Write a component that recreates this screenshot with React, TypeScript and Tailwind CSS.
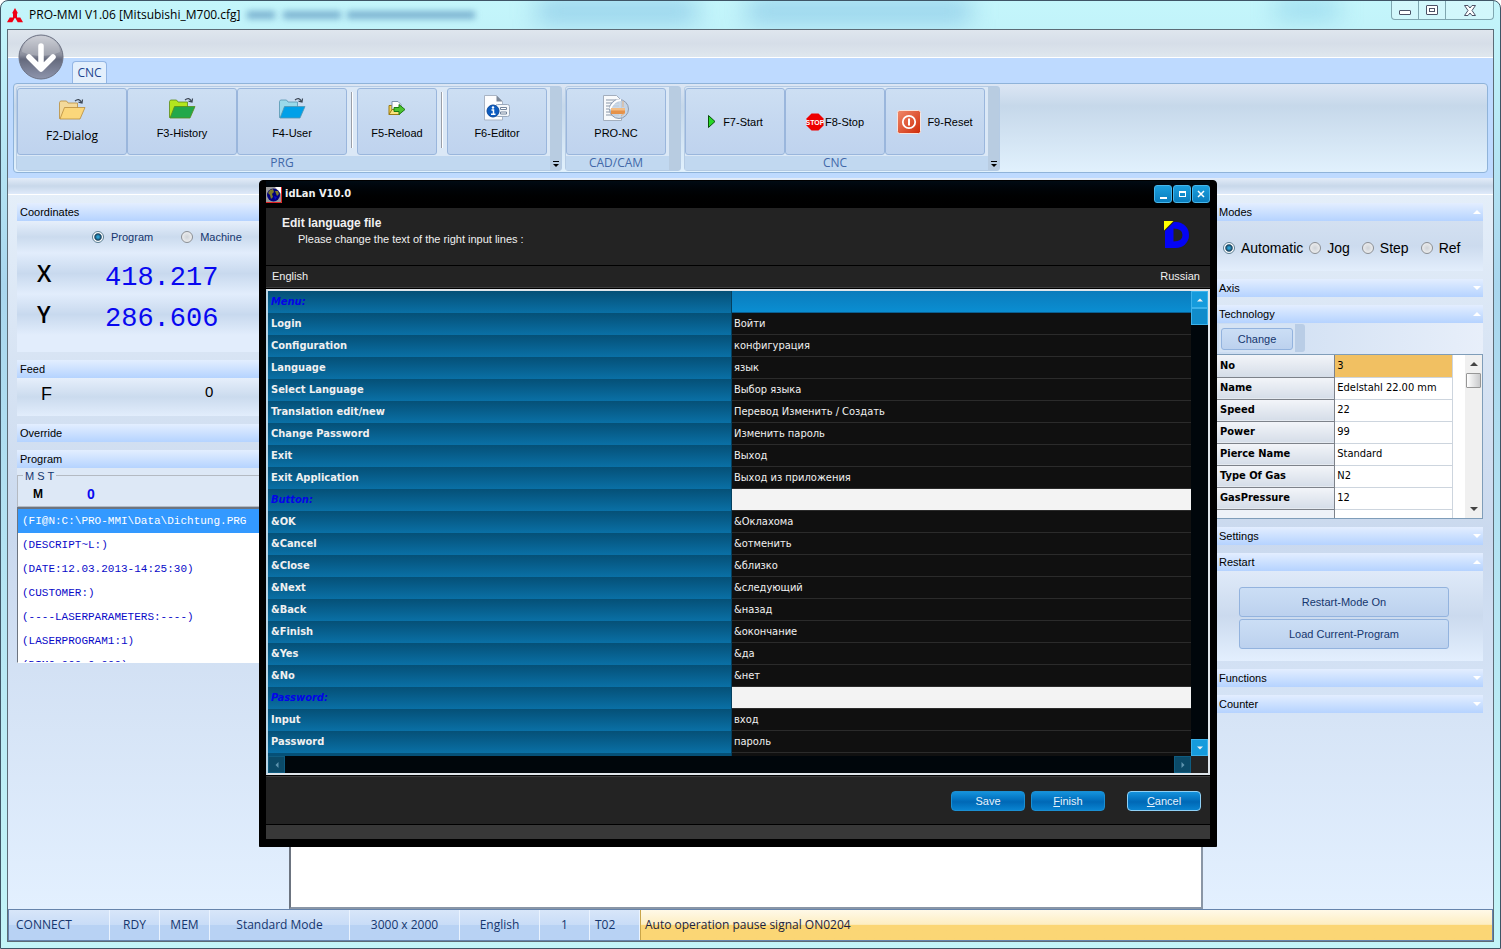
import React, { useState } from 'react';
import clsx from 'clsx';

const SANS = "font-['Liberation_Sans',sans-serif]";
const SEGOE = "font-['Open_Sans',sans-serif]";
const TAHOMA = "font-['DejaVu_Sans_Condensed','DejaVu_Sans',sans-serif]";

interface Translation {
  source: string;
  target: string;
  heading?: boolean;
}

const TRANSLATIONS: Translation[] = [
  { source: 'Menu:', target: '', heading: true },
  { source: 'Login', target: 'Войти' },
  { source: 'Configuration', target: 'конфигурация' },
  { source: 'Language', target: 'язык' },
  { source: 'Select Language', target: 'Выбор языка' },
  { source: 'Translation edit/new', target: 'Перевод Изменить / Создать' },
  { source: 'Change Password', target: 'Изменить пароль' },
  { source: 'Exit', target: 'Выход' },
  { source: 'Exit Application', target: 'Выход из приложения' },
  { source: 'Button:', target: '', heading: true },
  { source: '&OK', target: '&Оклахома' },
  { source: '&Cancel', target: '&отменить' },
  { source: '&Close', target: '&близко' },
  { source: '&Next', target: '&следующий' },
  { source: '&Back', target: '&назад' },
  { source: '&Finish', target: '&окончание' },
  { source: '&Yes', target: '&да' },
  { source: '&No', target: '&нет' },
  { source: 'Password:', target: '', heading: true },
  { source: 'Input', target: 'вход' },
  { source: 'Password', target: 'пароль' },
];

const TECHNOLOGY = [
  ['No', '3'],
  ['Name', 'Edelstahl 22.00 mm'],
  ['Speed', '22'],
  ['Power', '99'],
  ['Pierce Name', 'Standard'],
  ['Type Of Gas', 'N2'],
  ['GasPressure', '12'],
];

const PROGRAM_LINES = [
  '(FI@N:C:\\PRO-MMI\\Data\\Dichtung.PRG',
  '(DESCRIPT~L:)',
  '(DATE:12.03.2013-14:25:30)',
  '(CUSTOMER:)',
  '(----LASERPARAMETERS:----)',
  '(LASERPROGRAM1:1)',
  '(DIM0.000x0.000)',
];

/* ---------- icons ---------- */

function MitsubishiLogo() {
  return (
    <svg width="16" height="15" viewBox="0 0 16 15" fill="#f00014">
      <path d="M8 0l2.700 4.700L8 9.400 5.300 4.700z" />
      <path d="M8 9.400L5.300 14.200H0l2.700-4.800z" />
      <path d="M8 9.400h5.300l2.700 4.800h-5.300z" />
      <path d="M6 6h4v4H6z" />
    </svg>
  );
}

function OrbIcon() {
  return (
    <svg width="46" height="46" viewBox="0 0 46 46">
      <defs>
        <linearGradient id="orb" x1="0" y1="0" x2="0" y2="1">
          <stop offset="0" stopColor="#c3c6cf" />
          <stop offset="0.45" stopColor="#8b8f9d" />
          <stop offset="0.55" stopColor="#656a7d" />
          <stop offset="1" stopColor="#8e95ad" />
        </linearGradient>
      </defs>
      <circle cx="23" cy="23" r="22" fill="url(#orb)" stroke="#6d7283" />
      <path d="M4 18a19 16 0 0 1 38 0q-19 8-38 0z" fill="#fff" opacity="0.2" />
      <path d="M23 12v22M11 23l12 12 12-12" fill="none" stroke="#fff" strokeWidth="5.5" strokeLinecap="round" strokeLinejoin="round" />
    </svg>
  );
}

interface FolderProps {
  back: string;
  front: string;
  line: string;
}

function FolderIcon({ back, front, line }: FolderProps) {
  return (
    <svg width="28" height="24" viewBox="0 0 28 24">
      <path d="M1.500 21.500V5.500l1-1.500h6l1.500 2h9.500v15.500z" fill={back} stroke={line} strokeWidth="0.8" />
      <path d="M2 22L6.500 10.500h20.500L22 22z" fill={front} stroke={line} strokeWidth="0.8" />
      <path d="M17 4q4-3.500 6.500 1.500M24.500 2.500l-.500 3.500-3.500-.800" fill="none" stroke="#3c4654" strokeWidth="1.200" />
    </svg>
  );
}

function ReloadIcon() {
  return (
    <svg width="18" height="18" viewBox="0 0 18 18">
      <path d="M1 15.500V6.500h3V15.500z" fill="#f4d354" stroke="#9a7b12" />
      <path d="M4 2.500h6l3 3v7H4z" fill="#fff" stroke="#7d93ad" />
      <path d="M1 15.500l3-5h9l-1.500 5z" fill="#f9e27c" stroke="#9a7b12" />
      <path d="M6 8.500h5V5.500l6 5-6 5v-3H6z" fill="#4cc431" stroke="#1d7a12" />
    </svg>
  );
}

function EditorIcon() {
  return (
    <svg width="28" height="26" viewBox="0 0 28 26">
      <path d="M1.500 .500h12l6 6v18.500h-18z" fill="#fdfdfe" stroke="#a9b4c4" />
      <path d="M13.500 .500v6h6z" fill="#7c8899" />
      <rect x="12.500" y="9.500" width="14" height="12" rx="2" fill="#f3f6fa" stroke="#9aa9bd" />
      <path d="M17.500 12.500h6v2h-6zM17.500 17h6v2h-6z" fill="#fff" stroke="#73849c" />
      <circle cx="10" cy="16" r="6" fill="#0d5cc0" stroke="#0a4799" />
      <path d="M8.500 15h2v4M8 19.200h4.500" fill="none" stroke="#fff" strokeWidth="1.500" />
      <circle cx="10" cy="12.500" r="1.200" fill="#fff" />
    </svg>
  );
}

function ProNcIcon() {
  return (
    <svg width="28" height="28" viewBox="0 0 28 28">
      <path d="M1.500 1.500h13l5 5v20h-18z" fill="#f8fafc" stroke="#a3aebd" />
      <path d="M4 6h10M4 9h13M4 12h13M4 15h13M4 18h13M4 21h13" stroke="#8a97a8" />
      <circle cx="17" cy="15" r="9.500" fill="#c3d2e4" fillOpacity="0.850" stroke="#8e9bb0" />
      <path d="M8 15q4-9 11-9" fill="none" stroke="#fff" strokeWidth="2" />
      <path d="M9 14h14v6H9z" fill="#e5924a" />
      <path d="M9 14h14v2.500H9z" fill="#f3bd85" />
      <path d="M19 22l4-3M21 7v6" stroke="#e5b283" />
    </svg>
  );
}

function PlayIcon() {
  return (
    <svg width="10" height="15" viewBox="0 0 10 15">
      <path d="M1.500 1.500v12l6.500-6z" fill="#27d827" stroke="#0a4f0a" />
    </svg>
  );
}

function StopIcon() {
  return (
    <svg width="18" height="18" viewBox="0 0 18 18">
      <path d="M5.500 .500h7l5 5v7l-5 5h-7l-5-5v-7z" fill="#ee0000" />
      <text x="9" y="12" textAnchor="middle" fontSize="7" fontWeight="bold" fill="#fff" fontFamily="Liberation Sans, sans-serif">
        STOP
      </text>
    </svg>
  );
}

function ResetIcon() {
  return (
    <svg width="24" height="24" viewBox="0 0 24 24">
      <defs>
        <linearGradient id="reset" x1="0" y1="0" x2="1" y2="1">
          <stop offset="0" stopColor="#f08a6b" />
          <stop offset="1" stopColor="#cf2a08" />
        </linearGradient>
      </defs>
      <rect x="0.500" y="0.500" width="23" height="23" rx="2" fill="url(#reset)" stroke="#f7e3dc" />
      <circle cx="12" cy="12" r="6.200" fill="none" stroke="#fff" strokeWidth="1.800" />
      <path d="M12 8.500v7" stroke="#fff" strokeWidth="2" />
    </svg>
  );
}

function GlobeIcon() {
  return (
    <svg width="16" height="16" viewBox="0 0 16 16">
      <rect width="16" height="16" fill="#9a9a9a" />
      <path d="M9 0h7v8z" fill="#fff" />
      <path d="M0 15.500h15.500V0" fill="none" stroke="#e02020" />
      <circle cx="7.500" cy="8" r="6.500" fill="#00007e" />
      <path d="M4 3l3-1 1 3-2 2 1 3-2 2-1-4-2-2zM9 4l3 0 1 3-2 2z" fill="#7d7a28" />
      <path d="M8 9l3 1-2 3z" fill="#0808d0" />
    </svg>
  );
}

function DLogo() {
  return (
    <svg width="26" height="28" viewBox="0 0 26 28">
      <path d="M1 10L10 1H12a13 13 0 0 1 0 26H1z" fill="#0404f5" />
      <path d="M9.500 7.500q9 0 9 6.500t-9 6.500z" fill="#232323" />
      <path d="M0 0h9.500L0 9.500z" fill="#ffff00" />
    </svg>
  );
}

function Triangle({ dir = 'up', className }: { dir?: 'up' | 'down' | 'left' | 'right'; className?: string }) {
  const shapes = {
    up: 'M0 6l4-4 4 4z',
    down: 'M0 2l4 4 4-4z',
    left: 'M6 0L2 4l4 4z',
    right: 'M2 0l4 4-4 4z',
  };
  return (
    <svg width="8" height="8" viewBox="0 0 8 8" className={className} fill="currentColor">
      <path d={shapes[dir]} />
    </svg>
  );
}

/* ---------- main window ---------- */

function TitleBar() {
  return (
    <header className="relative flex h-[28px] shrink-0 items-start justify-between overflow-hidden">
      {/* glass reflections */}
      <div className="absolute left-[240px] top-[10px] h-2 w-7 bg-[#4d87b5]/60 blur-[3px]" />
      <div className="absolute left-[276px] top-[10px] h-2 w-[58px] bg-[#4d87b5]/60 blur-[3px]" />
      <div className="absolute left-[340px] top-[10px] h-2 w-32 bg-[#4d87b5]/60 blur-[3px]" />
      <div className="absolute left-[530px] top-0 h-5 w-40 bg-[#5a9fd6]/50 blur-md" />
      <div className="absolute left-[740px] top-0 h-5 w-56 bg-[#5a9fd6]/50 blur-md" />
      <div className="absolute left-[1268px] top-0 h-4 w-16 bg-[#5fb4dc]/50 blur-md" />
      <h1 className={clsx('relative flex items-center gap-[6px] pt-[5px] text-[12px] leading-[18px] text-black', SEGOE)}>
        <MitsubishiLogo />
        PRO-MMI V1.06 [Mitsubishi_M700.cfg]
      </h1>
      <div className="relative flex h-[19px] rounded-b border border-t-0 border-[#7fa6b0] bg-white/25">
        <button aria-label="Minimize" className="flex w-[27px] items-center justify-center border-r border-[#7fa6b0]">
          <span className="mt-1 h-[5px] w-3 rounded-[1px] border border-[#4c5266] bg-white" />
        </button>
        <button aria-label="Maximize" className="flex w-[27px] items-center justify-center border-r border-[#7fa6b0]">
          <span className="flex h-[10px] w-3 items-center justify-center rounded-[1px] border border-[#4c5266] bg-white">
            <span className="h-1 w-[6px] border border-[#4c5266]" />
          </span>
        </button>
        <button aria-label="Close" className="flex w-[47px] items-center justify-center">
          <svg width="12" height="11" viewBox="0 0 12 11">
            <path d="M.500 .500h3.500l2 2.500 2-2.500h3.500L8 5.500l3.500 5H8L6 8l-2 2.500H.500l3.500-5z" fill="#fff" stroke="#4c5266" />
          </svg>
        </button>
      </div>
    </header>
  );
}

interface RibbonButtonProps {
  label: string;
  icon: React.ReactNode;
  width: string;
  layout?: string;
  font?: string;
}

function RibbonButton({ label, icon, width, layout = 'flex-col gap-1 pb-[10px]', font = SANS }: RibbonButtonProps) {
  return (
    <button
      className={clsx(
        'flex h-[67px] items-center justify-center rounded-[3px] border border-[#9ab6dc] bg-linear-to-b from-[#cddff3] via-[#c5d8f0] to-[#bfd3ee] leading-[14px] text-black',
        font === SEGOE ? 'text-[12px]' : 'text-[11px]',
        layout,
        width,
        font,
      )}
    >
      <span className="flex h-7 items-center justify-center">{icon}</span>
      {label}
    </button>
  );
}

function RibbonSeparator() {
  return <div className="mx-1 mt-1 h-[56px] w-[2px] border-r border-white bg-[#9a9fa8]" />;
}

interface RibbonGroupProps {
  label: string;
  children: React.ReactNode;
  overflow?: boolean;
}

function RibbonGroup({ label, children, overflow }: RibbonGroupProps) {
  return (
    <section className="flex rounded-[3px] border border-[#b5cbe4] bg-[#dbe8f6]">
      <div className="flex flex-col">
        <div className="flex pr-[3px] pt-px">{children}</div>
        <h2 className={clsx('mt-px bg-[#c1d8f0] pr-[3px] text-center text-[12px] leading-[14px] text-[#4268a9]', SEGOE)}>
          {label}
        </h2>
      </div>
      <div className="flex w-[11px] flex-col items-center justify-end bg-[#b8cce1] pb-[2px]">
        {overflow && (
          <svg width="8" height="8" viewBox="0 0 8 8">
            <path d="M1 1.500h6" stroke="#000" />
            <path d="M1 4h6L4 7z" fill="#000" />
          </svg>
        )}
      </div>
    </section>
  );
}

function Ribbon() {
  return (
    <div className="relative shrink-0 bg-[#bedaff] pb-[5px]">
      <div className="h-[28px] border-b border-white bg-linear-to-b from-[#dfe6ee] via-[#d6dee8] to-[#dfe7ee]" />
      <button aria-label="Application menu" className="absolute left-[10px] top-[4px]">
        <OrbIcon />
      </button>
      <div className="flex h-[25px] items-end pl-[64px]">
        <button
          className={clsx(
            'h-[22px] w-[35px] rounded-t border border-b-0 border-[#93b5e4] bg-[#e3effc] text-[12px] text-[#1d4590]',
            SEGOE,
          )}
        >
          CNC
        </button>
      </div>
      <div className="mx-[5px] flex gap-[3px] rounded border border-[#8fb3d9] bg-linear-to-b from-[#dce6f4] from-0% via-[#c6d8ea] via-25% to-[#e1f1fd] px-[2px] pb-px pt-[2px]">
        <RibbonGroup label="PRG" overflow>
          <RibbonButton
            width="w-[110px]"
            label="F2-Dialog"
            font={SEGOE}
            layout="flex-col gap-[6px] pb-[6px]"
            icon={<FolderIcon back="#f3d99a" front="#fbd77b" line="#b98d3c" />}
          />
          <RibbonButton width="w-[110px]" label="F3-History" icon={<FolderIcon back="#b4e61d" front="#22a84a" line="#5b8a1b" />} />
          <RibbonButton width="w-[110px]" label="F4-User" icon={<FolderIcon back="#99d9ea" front="#00a0e8" line="#5695b0" />} />
          <RibbonSeparator />
          <RibbonButton width="w-[80px]" label="F5-Reload" icon={<ReloadIcon />} />
          <RibbonSeparator />
          <RibbonButton width="w-[100px]" label="F6-Editor" icon={<EditorIcon />} />
        </RibbonGroup>
        <RibbonGroup label="CAD/CAM">
          <RibbonButton width="w-[100px]" label="PRO-NC" icon={<ProNcIcon />} />
        </RibbonGroup>
        <RibbonGroup label="CNC" overflow>
          <RibbonButton width="w-[100px]" label="F7-Start" layout="gap-[6px]" icon={<PlayIcon />} />
          <RibbonButton width="w-[100px]" label="F8-Stop" layout="gap-px" icon={<StopIcon />} />
          <RibbonButton width="w-[100px]" label="F9-Reset" layout="gap-[6px]" icon={<ResetIcon />} />
        </RibbonGroup>
      </div>
    </div>
  );
}

interface PanelProps {
  title: string;
  open?: boolean;
  children?: React.ReactNode;
}

function Panel({ title, open, children }: PanelProps) {
  return (
    <section className="pt-2">
      <button
        aria-expanded={!!open}
        className="flex h-[18px] w-full items-center justify-between bg-linear-to-b from-[#e3eeff] to-[#b5d3ff] pl-[3px] pr-[2px] text-[11px] leading-4 text-black"
      >
        {title}
        <Triangle dir={open ? 'up' : 'down'} className="text-white" />
      </button>
      {children}
    </section>
  );
}

interface RadioProps {
  name: string;
  label: string;
  checked: boolean;
  onChange: () => void;
  className?: string;
}

function Radio({ name, label, checked, onChange, className }: RadioProps) {
  return (
    <label className={clsx('flex items-center', className)}>
      <input
        type="radio"
        name={name}
        checked={checked}
        onChange={onChange}
        className="m-0 size-3 shrink-0 appearance-none rounded-full border border-[#8b8f94] bg-radial from-[#cfd3d8] to-[#f6f6f6] checked:border-[#5c7f93] checked:from-[#2c9fd0] checked:from-15% checked:via-[#15405c] checked:via-45% checked:to-white checked:to-60%"
      />
      {label}
    </label>
  );
}

function LeftSidebar() {
  const [source, setSource] = useState('Program');

  return (
    <aside className={clsx('w-[277px] shrink-0 pl-[9px]', SANS)}>
      <Panel title="Coordinates" open>
        <div className="h-[131px] bg-[#e2edfc] text-[#15366e]">
          <div className="flex h-8 items-center gap-7 bg-linear-to-b from-[#e6effb] via-[#cbdbee] to-[#e2edfc] pl-[75px] text-[11px]">
            <Radio name="source" label="Program" className="gap-[7px]" checked={source === 'Program'} onChange={() => setSource('Program')} />
            <Radio name="source" label="Machine" className="gap-[7px]" checked={source === 'Machine'} onChange={() => setSource('Machine')} />
          </div>
          {[
            ['X', '418.217'],
            ['Y', '286.606'],
          ].map(([axis, value]) => (
            <div key={axis} className="flex h-[41px] items-center bg-linear-to-b from-[#e2edfc] via-[#c8d9ee] to-[#e2edfc] pl-5">
              <span className="w-[68px] text-[23px] font-semibold text-black font-['Open_Sans',sans-serif]">{axis}</span>
              <span className="pt-2 text-[27px] leading-8 font-medium text-[#0808f0] font-['Liberation_Mono',monospace]">{value}</span>
            </div>
          ))}
        </div>
      </Panel>
      <Panel title="Feed" open>
        <div className="flex h-[38px] items-start bg-linear-to-b from-[#e6effb] via-[#cbdbee] to-[#e2edfc] pl-6 pt-1 text-black">
          <span className="w-[164px] pt-[2px] text-[18px] leading-5">F</span>
          <span className="text-[15px] leading-5">0</span>
        </div>
      </Panel>
      <Panel title="Override" />
      <Panel title="Program" open>
        <fieldset className="relative h-[39px] bg-[#dde8f6] pt-4">
          <div className="absolute inset-x-0 bottom-0 top-[7px] border border-r-0 border-[#b4bac2]" />
          <legend className="absolute left-[6px] top-0 bg-[#dde8f6] px-[2px] text-[11px] leading-4 text-[#15366e]">M S T</legend>
          <div className="relative flex items-center pl-4 text-black">
            <span className="w-[54px] text-[12px] leading-[18px] font-bold">M</span>
            <span className="text-[14px] leading-[20px] font-bold text-[#0808f0]">0</span>
          </div>
        </fieldset>
        <ul className="h-[156px] overflow-hidden border border-r-0 border-t-2 border-[#6c7480] border-b-white bg-white font-['Liberation_Mono',monospace] text-[11px] leading-6 text-[#0a0ac8]">
          {PROGRAM_LINES.map((line, i) => (
            <li key={line} className={clsx('h-6 whitespace-nowrap pl-1', i === 0 && 'bg-[#3399ff] text-white')}>
              {line}
            </li>
          ))}
        </ul>
      </Panel>
    </aside>
  );
}

function TechnologyTable() {
  return (
    <div className={clsx('flex h-[165px] overflow-hidden border border-[#7f9db9] bg-white', TAHOMA)}>
      <table className="w-[236px] table-fixed border-collapse self-start text-[11px] leading-[14px] text-black">
        <tbody>
          {TECHNOLOGY.map(([name, value], i) => (
            <tr key={name} className="h-[22px]">
              <th className="w-1/2 border-b border-r border-[#7d828a] bg-linear-to-b from-[#f3f5f9] to-[#d5dde8] p-0 pl-[3px] text-left font-bold">
                {name}
              </th>
              <td className={clsx('border-b border-r border-[#cdd5de] p-0 pl-[2px]', i === 0 && 'bg-[#f1c062]')}>{value}</td>
            </tr>
          ))}
          <tr className="h-[22px]">
            <th className="border-r border-[#7d828a] bg-[#eef2f8]" />
            <td className="border-r border-[#cdd5de]" />
          </tr>
        </tbody>
      </table>
      <div className="ml-auto flex w-[17px] flex-col items-center bg-[#f0f0f0] text-[#444]">
        <button aria-label="Scroll up" className="flex h-[18px] items-center">
          <Triangle dir="up" />
        </button>
        <div className="h-[15px] w-[15px] rounded-[1px] border border-[#979797] bg-linear-to-r from-white to-[#c9cacc]" />
        <button aria-label="Scroll down" className="mt-auto flex h-[18px] items-center">
          <Triangle dir="down" />
        </button>
      </div>
    </div>
  );
}

const MODES = ['Automatic', 'Jog', 'Step', 'Ref'];

function RightSidebar() {
  const [mode, setMode] = useState('Automatic');
  const blueButton =
    'rounded-[3px] border border-[#93b3de] bg-linear-to-b from-[#cbdef5] to-[#bcd1ee] text-[11px] text-[#15366e]';

  return (
    <aside className={clsx('w-[285px] shrink-0 pl-2 pr-[10px]', SANS)}>
      <Panel title="Modes" open>
        <div className="flex h-[50px] items-center gap-[6px] bg-linear-to-b from-[#d3e0f1] via-[#ccdbee] to-[#e3eefc] pl-[7px] pt-1 text-[14px] text-black">
          {MODES.map((item) => (
            <Radio
              key={item}
              name="mode"
              label={item}
              checked={mode === item}
              onChange={() => setMode(item)}
              className={clsx('gap-[6px]', (item === 'Step' || item === 'Ref') && 'ml-[6px]')}
            />
          ))}
        </div>
      </Panel>
      <Panel title="Axis" />
      <Panel title="Technology" open>
        <div className="bg-linear-to-r from-[#cbdcf1] to-[#e8effa]">
          <div className="flex h-[31px] items-start pl-[3px] pt-px">
            <div className="flex rounded-[3px] bg-[#b9cde6] pr-[10px]">
              <div className="bg-[#d5e3f4] p-[2px]">
                <button className={clsx('h-[22px] w-[72px]', blueButton)}>Change</button>
              </div>
            </div>
          </div>
          <TechnologyTable />
        </div>
      </Panel>
      <Panel title="Settings" />
      <Panel title="Restart" open>
        <div className="flex h-[90px] flex-col gap-[2px] bg-linear-to-b from-[#dfeaf9] via-[#cbdaee] to-[#e3effe] pl-[23px] pr-[34px] pt-4">
          <button className={clsx('h-[30px]', blueButton)}>Restart-Mode On</button>
          <button className={clsx('h-[30px]', blueButton)}>Load Current-Program</button>
        </div>
      </Panel>
      <Panel title="Functions" />
      <Panel title="Counter" />
    </aside>
  );
}

const STATUS_CELLS = [
  { text: 'CONNECT', className: 'w-[101px] pl-[7px]' },
  { text: 'RDY', className: 'w-[50px] text-center' },
  { text: 'MEM', className: 'w-[50px] text-center' },
  { text: 'Standard Mode', className: 'w-[140px] text-center' },
  { text: '3000 x 2000', className: 'w-[110px] text-center' },
  { text: 'English', className: 'w-[80px] text-center' },
  { text: '1', className: 'w-[50px] text-center' },
  { text: 'T02', className: 'w-[50px] pl-[5px]' },
];

function StatusBar() {
  return (
    <footer
      className={clsx(
        'flex h-[32px] shrink-0 items-stretch border border-[#6684ac] text-[12px] leading-[30px] text-[#15366e]',
        SEGOE,
      )}
    >
      {STATUS_CELLS.map((cell) => (
        <span
          key={cell.text}
          className={clsx(
            'shrink-0 border-r border-[#eaf3ff] bg-linear-to-b from-[#d8e6f9] from-0% via-[#c8dcf7] via-50% to-[#b8d2f4] to-50%',
            cell.className,
          )}
        >
          {cell.text}
        </span>
      ))}
      <span className="flex-1 border-l border-[#c9a54a] bg-linear-to-b from-[#fff9e8] from-0% via-[#fdeec2] via-48% to-[#fbd675] to-50% pl-1 text-[#1c2340]">
        Auto operation pause signal ON0204
      </span>
    </footer>
  );
}

/* ---------- language dialog ---------- */

function DialogButton({ label, accessKey, focused }: { label: string; accessKey?: boolean; focused?: boolean }) {
  return (
    <button
      className={clsx(
        'h-5 w-[74px] rounded border bg-linear-to-b from-[#1492dc] via-[#0068b6] via-55% to-[#0a84d0] text-[11px] leading-[18px] text-[#e6f3fc]',
        focused ? 'ml-4 border-[#8fd0f5]' : 'border-[#1b8fd2]',
      )}
    >
      {accessKey ? (
        <>
          <u>{label[0]}</u>
          {label.slice(1)}
        </>
      ) : (
        label
      )}
    </button>
  );
}

function LanguageDialog() {
  const captionButton =
    'flex size-[18px] items-center justify-center rounded-[3px] border border-[#46b6ec] bg-linear-to-b from-[#1b9fde] to-[#0a7dbd] text-white';
  const scrollButton = 'flex size-[17px] shrink-0 items-center justify-center border';

  return (
    <div
      role="dialog"
      aria-labelledby="dialog-title"
      className={clsx('absolute left-[258px] right-[283px] top-[179px] rounded-t border border-black bg-black px-[6px] pb-[7px] text-[#f0f0f0]', SANS)}
    >
      <div className="flex h-[27px] items-center bg-linear-to-b from-[#000b14] to-black">
        <GlobeIcon />
        <h2 id="dialog-title" className={clsx('pl-[3px] text-[11px] font-bold', TAHOMA)}>
          idLan V10.0
        </h2>
        <div className="ml-auto flex gap-px pb-[2px]">
          <button aria-label="Minimize dialog" className={captionButton}>
            <span className="mt-2 h-[2px] w-[7px] bg-white" />
          </button>
          <button aria-label="Maximize dialog" className={captionButton}>
            <span className="h-[6px] w-[7px] border border-t-2 border-white" />
          </button>
          <button aria-label="Close dialog" className={captionButton}>
            <svg width="8" height="8" viewBox="0 0 8 8">
              <path d="M1 1l6 6M7 1L1 7" stroke="#fff" strokeWidth="1.500" />
            </svg>
          </button>
        </div>
      </div>

      <div className="flex h-[57px] justify-between bg-[#232323] pl-4 pr-5 pt-[7px]">
        <div>
          <p className="text-[12px] leading-4 font-bold">Edit language file</p>
          <p className="pl-4 text-[11px] leading-4">Please change the text of the right input lines :</p>
        </div>
        <div className="pt-[6px]">
          <DLogo />
        </div>
      </div>
      <div className="mt-px flex h-[22px] items-center justify-between border-b border-[#3c3c3c] bg-[#232323] pl-[6px] pr-[10px] text-[11px]">
        <span>English</span>
        <span>Russian</span>
      </div>

      <div className="mt-px border-2 border-[#dfe5ea] border-l-[#b8d4e4]">
        <div className="flex">
          <div className="h-[465px] flex-1 overflow-hidden">
            <table className={clsx('w-full table-fixed border-separate border-spacing-0 text-[11px] leading-[14px]', TAHOMA)}>
              <tbody>
                {TRANSLATIONS.map((row, i) => (
                  <tr key={`${row.source}-${i}`} className="h-[22px]">
                    <th
                      className={clsx(
                        'w-[464px] border-r border-[#04405f] bg-linear-to-b from-[#055077] to-[#0a70a6] p-0 pl-[3px] text-left font-bold',
                        row.heading && 'italic text-[#0404e8]',
                      )}
                    >
                      {row.source}
                    </th>
                    <td
                      className={clsx(
                        'border-b p-0 pl-[2px]',
                        !row.heading && 'border-[#2b2b2b] bg-[#101010]',
                        row.heading && i === 0 && 'border-[#0a5f92] bg-linear-to-b from-[#0b7cbc] to-[#0a8ed2]',
                        row.heading && i > 0 && 'border-[#2b2b2b] bg-[#f3f3f3]',
                      )}
                    >
                      {row.target}
                    </td>
                  </tr>
                ))}
                <tr className="h-[22px]">
                  <th className="border-r border-[#04405f] bg-[#055077]" />
                  <td className="bg-[#101010]" />
                </tr>
              </tbody>
            </table>
          </div>
          <div className="flex w-[17px] flex-col bg-[#00060b]">
            <button aria-label="Scroll list up" className={clsx(scrollButton, 'border-[#3db2ea] bg-[#159bdc]')}>
              <Triangle dir="up" className="size-[6px]" />
            </button>
            <div className="h-[17px] border border-[#3db2ea] bg-[#108ccb]" />
            <button aria-label="Scroll list down" className={clsx(scrollButton, 'mt-auto border-[#3db2ea] bg-[#159bdc]')}>
              <Triangle dir="down" className="size-[6px]" />
            </button>
          </div>
        </div>
        <div className="flex bg-[#00060b] text-[#5f94af]">
          <button aria-label="Scroll list left" className={clsx(scrollButton, 'border-[#0f5c80] bg-[#0b4a68]')}>
            <Triangle dir="left" className="size-[6px]" />
          </button>
          <button aria-label="Scroll list right" className={clsx(scrollButton, 'ml-auto border-[#0f5c80] bg-[#0b4a68]')}>
            <Triangle dir="right" className="size-[6px]" />
          </button>
          <div className="w-[17px] bg-[#232323]" />
        </div>
      </div>

      <div className="mt-px flex h-[48px] items-center justify-end gap-[6px] border-t border-[#3c3c3c] bg-[#232323] pr-[9px]">
        <DialogButton label="Save" />
        <DialogButton label="Finish" accessKey />
        <DialogButton label="Cancel" accessKey focused />
      </div>
      <div className="mt-px h-[14px] bg-[#383838]" />
    </div>
  );
}

export default function App() {
  return (
    <div className="relative flex min-h-screen flex-col rounded-t-lg border border-[#3f5566] bg-linear-to-b from-[#c4f6fb] via-[#a9d6ee] via-30% to-[#c3f5f8] px-[6px] pb-[6px]">
      <TitleBar />
      <div className="flex flex-1 flex-col border border-[#5c6b76]">
        <Ribbon />
        <div className="h-[17px] shrink-0 border-b border-white bg-linear-to-b from-[#e3ecf8] via-[#c8d8ea] to-[#dfeafa]" />
        <main className="flex flex-1 bg-linear-to-b from-[#e4eef9] via-[#cad9ee] via-48% to-[#e3f0ff]">
          <LeftSidebar />
          <div className="ml-1 mr-[5px] flex-1 border-x-2 border-b-2 border-[#8a96a6] border-l-[#6c7480] bg-white" />
          <RightSidebar />
        </main>
        <StatusBar />
      </div>
      <LanguageDialog />
    </div>
  );
}
